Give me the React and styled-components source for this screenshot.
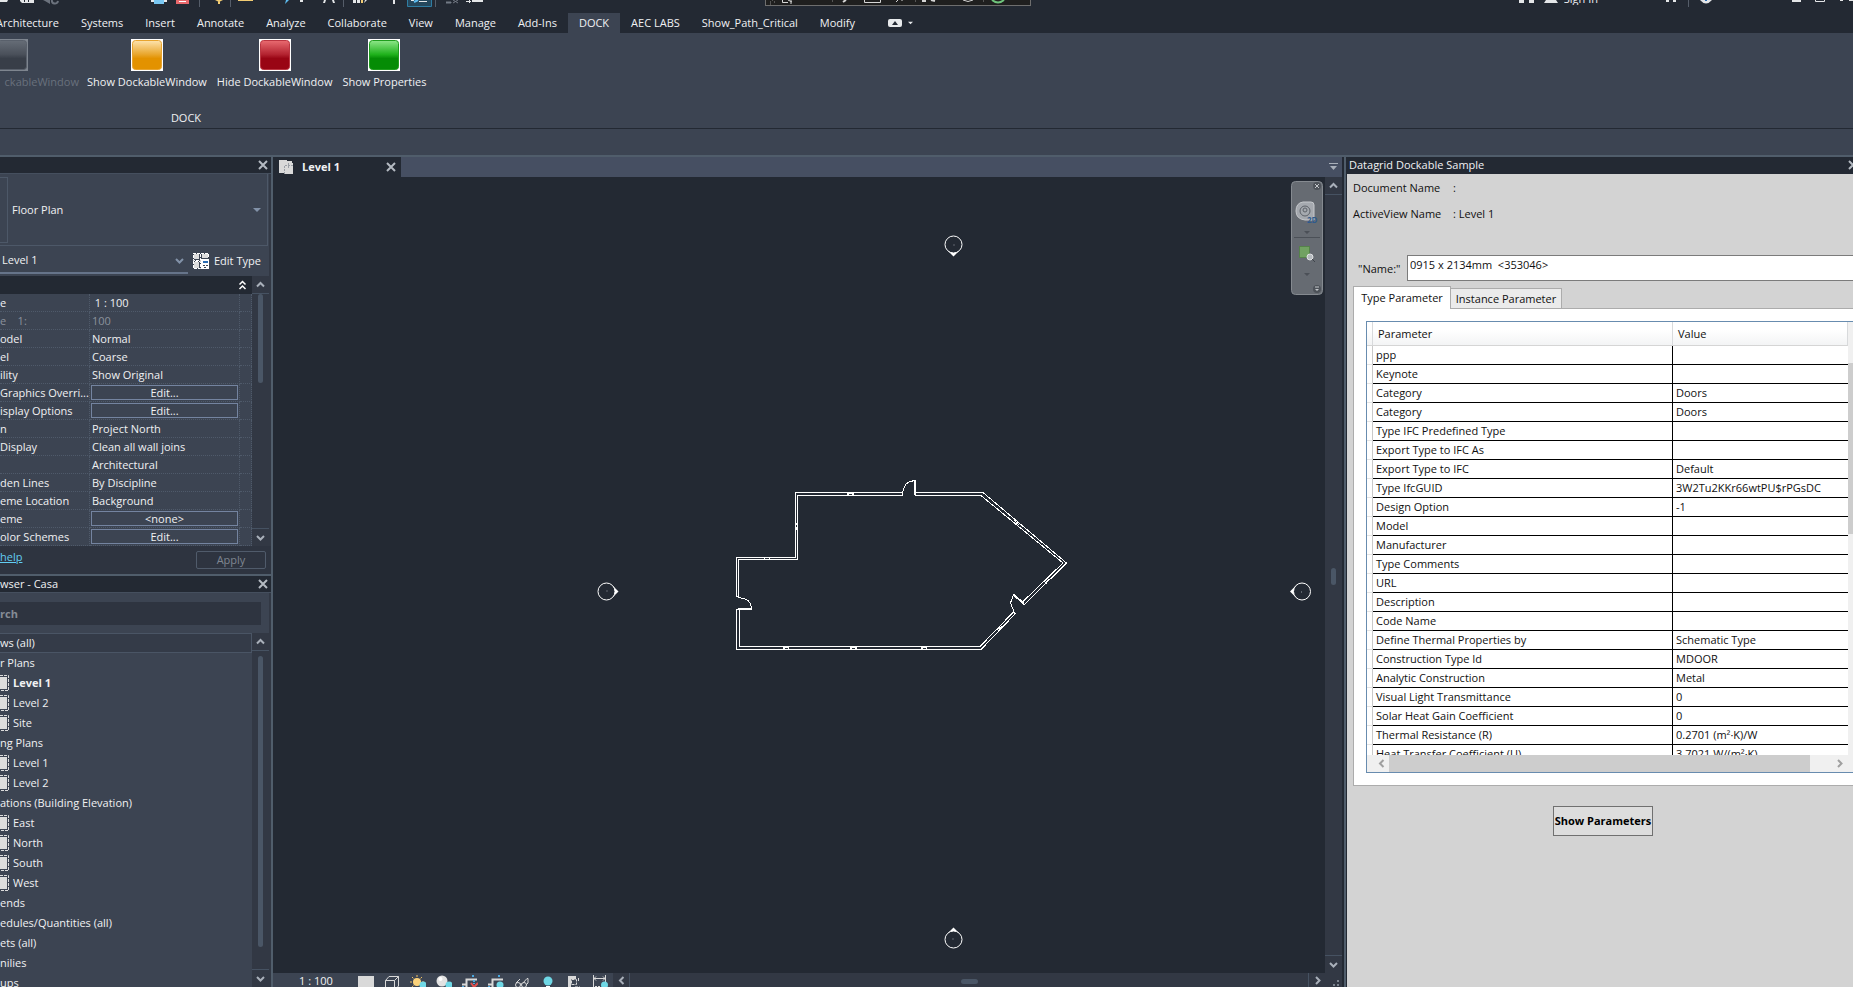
import React from "react";
import styled, { createGlobalStyle, css } from "styled-components";

const c = {
  ink: "#232933",
  panel: "#3c4452",
  well: "#2e3440",
  track: "#323844",
  line: "#505d6b",
  dots: "#4f5a6a",
  tabs: "#464f62",
  text: "#f0f1f3",
  glyph: "#a9b0ba",
};

const Global = createGlobalStyle`
  *, *::before, *::after { box-sizing: border-box; }
  body { margin: 0; background: ${c.ink}; overflow: hidden; }
  body, button, input, select, table {
    font-family: "Open Sans", "Noto Sans", sans-serif;
    font-size: 11px;
    line-height: 16px;
  }
  button, input, select { margin: 0; padding: 0; border: 0; border-radius: 0; color: inherit; background: none; }
  svg { display: block; flex: none; }
  ul { list-style: none; margin: 0; padding: 0; }
`;

const Shell = styled.div`
  display: flex;
  flex-direction: column;
  height: 100vh;
  color: ${c.text};
  overflow: hidden;
  white-space: nowrap;
`;

/* ---------- top bars ---------- */
const TitleBar = styled.header`
  position: relative;
  display: flex;
  align-items: flex-start;
  height: 13px;
  flex: none;
  background: ${c.ink};
`;
const QuickItem = styled.button`
  flex: none;
  margin-left: ${(p) => p.$gap}px;
`;
const Spacer = styled.div`
  flex: 1;
`;
const FloatBar = styled.div`
  position: absolute;
  left: 765px;
  top: 0;
  width: 266px;
  height: 6px;
  display: flex;
  background: #1f1f1f;
  border: 1px solid #6e6e6e;
  border-top: 0;
  overflow: hidden;
`;
const SignIn = styled.button`
  height: 5px;
  margin-left: 6px;
  display: flex;
  align-items: flex-end;
  overflow: hidden;
  line-height: 12px;
`;
const RibbonTabs = styled.nav`
  display: flex;
  align-items: center;
  flex: none;
  height: 20px;
  margin-left: -15px;
  background: ${c.ink};
`;
const RibbonTab = styled.button`
  height: 20px;
  padding: 0 11px;
  background: ${(p) => (p.$on ? c.panel : "transparent")};
`;
const CollapseButton = styled.button`
  display: flex;
  align-items: center;
  gap: 6px;
  margin-left: 22px;
`;
const Ribbon = styled.section`
  flex: none;
  height: 96px;
  background: ${c.panel};
  border-bottom: 1px solid ${c.ink};
`;
const RibbonItems = styled.div`
  display: flex;
  gap: 6px;
  height: 77px;
  padding-top: 6px;
`;
const RibbonButton = styled.button`
  display: flex;
  flex-direction: column;
  align-items: center;
  justify-content: flex-start;
  align-self: flex-start;
  gap: 3px;
  padding: 0 2px;
  color: ${(p) => (p.disabled ? "#69717d" : "inherit")};
  ${(p) =>
    p.$cut &&
    css`
      width: 79px;
      padding: 0;
      align-items: flex-start;
    `}
`;
const RibbonLabel = styled.span`
  align-self: flex-end;
`;
const GroupName = styled.div`
  width: 372px;
  text-align: center;
`;
const OptionsBar = styled.div`
  flex: none;
  height: 28px;
  background: ${c.panel};
  border-bottom: 2px solid ${c.line};
`;

/* ---------- workspace ---------- */
const Workspace = styled.main`
  display: flex;
  flex: 1;
  min-height: 0;
`;
const LeftDock = styled.aside`
  display: flex;
  flex-direction: column;
  flex: none;
  width: 273px;
  border-right: 2px solid ${c.line};
  background: ${c.track};
`;
const DockTitle = styled.div`
  display: flex;
  align-items: center;
  justify-content: space-between;
  flex: none;
  height: 17px;
  padding: 0 ${(p) => p.$right ?? 3}px 0 ${(p) => p.$left ?? 0}px;
  background: ${c.ink};
  border-bottom: 1px solid ${(p) => p.$edge ?? "#454f5e"};
`;
const PropertyBody = styled.div`
  flex: none;
  margin-right: 2px;
  background: ${c.panel};
`;
const TypePicker = styled.label`
  display: flex;
  align-items: center;
  height: 72px;
  margin-right: 1px;
  padding-right: 6px;
  border: 1px solid #4d5868;
  border-width: 0 1px 1px 0;
`;
const Thumb = styled.span`
  width: 8px;
  height: 66px;
  margin-right: 4px;
  border: 1px solid #4d5868;
  border-left: 0;
`;
const PlainSelect = styled.select`
  appearance: none;
  flex: 1;
  min-width: 0;
  height: 20px;
  outline: none;
`;
const FilterRow = styled.div`
  display: flex;
  align-items: center;
  height: 30px;
  gap: 5px;
`;
const FilterPicker = styled.label`
  display: flex;
  align-items: center;
  width: 188px;
  height: 26px;
  padding: 0 4px 0 2px;
  border-bottom: 2px solid #66748a;
`;
const EditType = styled.button`
  display: flex;
  align-items: center;
  gap: 5px;
`;
const Columns = styled.div`
  display: flex;
  flex: ${(p) => (p.$grow ? 1 : "none")};
  min-height: 0;
`;
const GroupHead = styled.div`
  display: flex;
  align-items: center;
  justify-content: flex-end;
  height: 18px;
  padding-right: 5px;
  background: ${c.ink};
`;
const PropTable = styled.table`
  width: 252px;
  table-layout: fixed;
  border-collapse: separate;
  border-spacing: 0;
`;
const PropName = styled.th`
  width: 90px;
  height: 18px;
  padding: 0;
  overflow: hidden;
  text-align: left;
  font-weight: 400;
  white-space: pre;
  color: ${(p) => (p.$dim ? "#8b929c" : "inherit")};
  border-right: 1px dotted ${c.dots};
  border-bottom: 1px dotted ${c.dots};
`;
const PropValue = styled.td`
  height: 18px;
  padding: 0 1px 0 ${(p) => (p.$button ? 1 : 2)}px;
  color: ${(p) => (p.$dim ? "#8b929c" : "inherit")};
  border-right: 1px dotted ${c.dots};
  border-bottom: 1px dotted ${c.dots};
`;
const PropMark = styled.td`
  width: 12px;
  padding: 0;
  border-right: 1px dotted ${c.dots};
  border-bottom: 1px dotted ${c.dots};
`;
const CellButton = styled.button`
  display: block;
  width: 100%;
  height: 15px;
  line-height: 13px;
  border: 1px solid #7484a0;
`;
const PropFooter = styled.div`
  display: flex;
  align-items: flex-start;
  justify-content: space-between;
  flex: none;
  height: 30px;
  padding: 3px 5px 0 0;
  background: ${c.well};
  border-bottom: 2px solid ${c.line};
`;
const HelpLink = styled.a`
  color: #62cdf2;
  text-decoration: underline;
`;
const ApplyButton = styled.button`
  width: 70px;
  height: 18px;
  margin-top: 2px;
  color: #7f8691;
  border: 1px solid #505b6b;
  border-radius: 2px;
`;
const SearchRow = styled.div`
  flex: none;
  height: 40px;
  margin-right: 2px;
  padding: 9px 8px 0 0;
  background: ${c.panel};
`;
const SearchBox = styled.input`
  display: block;
  width: 100%;
  height: 23px;
  background: ${c.well};
  outline: none;
  &::placeholder {
    color: #868c96;
    font-weight: 700;
    opacity: 1;
  }
`;
const Tree = styled.ul`
  width: 252px;
  overflow: hidden;
  background: ${c.panel};
`;
const TreeRow = styled.li`
  display: flex;
  align-items: center;
  gap: 4px;
  height: 20px;
  font-weight: ${(p) => (p.$bold ? 700 : 400)};
  ${(p) =>
    p.$root &&
    css`
      background: #343b48;
      border: 1px solid #4a5565;
      border-left: 0;
    `}
`;

/* ---------- scroll bars ---------- */
const Bar = styled.div`
  display: flex;
  flex: none;
  flex-direction: column;
  width: 17px;
  background: ${c.track};
`;
const BarButton = styled.button`
  display: flex;
  align-items: center;
  justify-content: center;
  width: 17px;
  height: 18px;
  border: 0 solid #465262;
  border-top-width: ${(p) => (p.$end ? 1 : 0)}px;
  border-bottom-width: ${(p) => (p.$end ? 0 : 1)}px;
`;
const BarTrack = styled.div`
  display: flex;
  flex-direction: column;
  align-items: center;
  flex: 1;
  padding-top: ${(p) => p.$from}px;
`;
const BarThumb = styled.div`
  width: 5px;
  height: ${(p) => p.$size}px;
  border-radius: 3px;
  background: #4a5666;
`;

/* ---------- drawing area ---------- */
const View = styled.section`
  display: flex;
  flex-direction: column;
  flex: 1;
  min-width: 0;
`;
const ViewTabs = styled.div`
  display: flex;
  align-items: center;
  justify-content: space-between;
  flex: none;
  height: 20px;
  padding-right: 4px;
  background: ${c.tabs};
`;
const ViewTab = styled.div`
  display: flex;
  align-items: center;
  width: 128px;
  height: 20px;
  padding: 0 5px 0 6px;
  background: ${c.ink};
`;
const ViewName = styled.strong`
  flex: 1;
  margin-left: 8px;
`;
const Canvas = styled.div`
  position: relative;
  flex: 1;
  min-width: 0;
  background: ${c.ink};
`;
const Drawing = styled.svg`
  width: 100%;
  height: 100%;
`;
const NavBar = styled.div`
  position: absolute;
  top: 4px;
  right: 2px;
  width: 32px;
  height: 114px;
`;
const ViewBar = styled.div`
  display: flex;
  align-items: flex-start;
  flex: none;
  height: 14px;
  background: ${c.track};
`;
const ViewTools = styled.div`
  display: flex;
  width: 340px;
  height: 14px;
  padding-left: 26px;
  background: ${c.panel};
`;
const ScaleButton = styled.button`
  width: 54px;
  height: 14px;
  text-align: left;
  overflow: hidden;
`;
const ViewTool = styled.button`
  display: flex;
  align-items: flex-start;
  justify-content: center;
  width: 26px;
  height: 14px;
  padding-top: 2px;
  overflow: hidden;
`;
const HTrack = styled.div`
  flex: 1;
  padding: 6px 0 0 331px;
`;
const HThumb = styled.div`
  width: 17px;
  height: 5px;
  border-radius: 3px;
  background: #4a5666;
`;
const HButton = styled.button`
  display: flex;
  align-items: flex-start;
  justify-content: center;
  width: 17px;
  height: 14px;
  padding-top: 3px;
  border: 0 solid #465262;
  border-left-width: ${(p) => (p.$end ? 1 : 0)}px;
  border-right-width: ${(p) => (p.$end ? 0 : 1)}px;
`;

/* ---------- parameter panel ---------- */
const RightDock = styled.aside`
  display: flex;
  flex-direction: column;
  flex: none;
  width: 509px;
  overflow: hidden;
  border-left: 2px solid ${c.line};
  background: ${c.ink};
  margin-left: 2px;
`;
const ParamBody = styled.div`
  flex: 1;
  margin-left: 1px;
  padding: 6px 0 0 6px;
  color: #101010;
  background: #d3d3d3;
`;
const Info = styled.div`
  display: grid;
  grid-template-columns: 100px 1fr;
  row-gap: 10px;
  margin-bottom: 33px;
`;
const NameRow = styled.div`
  display: flex;
  gap: 5px;
`;
const NameLabel = styled.label`
  width: 49px;
  padding: 6px 0 0 5px;
`;
const NameBox = styled.input`
  flex: 1;
  min-width: 0;
  height: 26px;
  padding: 0 0 7px 2px;
  background: #fff;
  border: 1px solid #7b7b7b;
  border-right: 0;
  outline: none;
`;
const Tabs = styled.div`
  display: flex;
  align-items: flex-end;
  height: 27px;
`;
const Tab = styled.button`
  height: ${(p) => (p.$on ? 23 : 20)}px;
  width: ${(p) => (p.$on ? 98 : 111)}px;
  margin-bottom: ${(p) => (p.$on ? -1 : 0)}px;
  border: 1px solid #acacac;
  border-bottom: 0;
  border-left-width: ${(p) => (p.$on ? 1 : 0)}px;
  background: ${(p) => (p.$on ? "#fff" : "#ebebeb")};
  position: relative;
`;
const TabPage = styled.div`
  padding: 12px 0 12px 12px;
  background: #fff;
  border: 1px solid #acacac;
  border-right: 0;
`;
const GridBox = styled.div`
  border: 1px solid #688caf;
  border-right: 0;
`;
const GridView = styled.div`
  display: flex;
  height: 433px;
  overflow: hidden;
`;
const Grid = styled.table`
  flex: 1;
  align-self: flex-start;
  table-layout: fixed;
  border-collapse: separate;
  border-spacing: 0;
`;
const HeadCell = styled.th`
  width: ${(p) => p.$w};
  height: 24px;
  padding: 0 0 0 ${(p) => (p.$mark ? 0 : 5)}px;
  text-align: left;
  font-weight: 400;
  background: linear-gradient(#fff 35%, #f3f4f5);
  border-right: 1px solid #d8dadc;
  border-bottom: 1px solid #d5d5d5;
`;
const MarkCell = styled.td`
  height: 19px;
  padding: 0;
  background: #fff;
  border-right: 1px solid #c9c9c9;
  border-bottom: 1px solid #e4e4e4;
`;
const GridCell = styled.td`
  height: 19px;
  padding: 0 0 0 3px;
  border-bottom: 1px solid #000;
  border-right: ${(p) => (p.$last ? "0" : "1px solid #000")};
`;
const GridScroll = styled.div`
  flex: none;
  width: 5px;
  padding-top: 41px;
  background: #f0f0f0;
`;
const GridScrollThumb = styled.div`
  height: 171px;
  background: #cdcdcd;
`;
const GridHScroll = styled.div`
  display: flex;
  align-items: center;
  height: 17px;
  padding: 0 9px 0 10px;
  gap: 3px;
  background: #f0f0f0;
`;
const GridHTrack = styled.div`
  flex: 1;
`;
const GridHThumb = styled.div`
  width: 95%;
  height: 17px;
  background: #cdcdcd;
`;
const ShowButton = styled.button`
  display: block;
  width: 100px;
  height: 30px;
  margin: 20px auto 0 200px;
  overflow: hidden;
  font-weight: 700;
  color: #000;
  background: #dddddd;
  border: 1px solid #707070;
`;

/* ---------- glyphs ---------- */
const Chevron = ({ dir = "down", color = c.glyph, size = 9, w = 2 }) => {
  const d = {
    down: "M1 3 L4.5 6.5 L8 3",
    up: "M1 6.5 L4.5 3 L8 6.5",
    left: "M6.5 1 L3 4.5 L6.5 8",
    right: "M3 1 L6.5 4.5 L3 8",
  }[dir];
  return (
    <svg width={size} height={size} viewBox="0 0 9 9" fill="none" stroke={color} strokeWidth={w}>
      <path d={d} />
    </svg>
  );
};
const Cross = ({ cut }) => (
  <svg width={cut ? 5 : 10} height="10" viewBox={cut ? "0 0 5 10" : "0 0 10 10"} stroke="#b4bac2" strokeWidth="2">
    <path d="M1 1 L9 9 M9 1 L1 9" />
  </svg>
);
const Arrow = ({ color = "#8292a8", w = 8 }) => (
  <svg width={w} height="4" viewBox="0 0 8 4" fill={color}>
    <path d="M0 0 H8 L4 4 Z" />
  </svg>
);
const EditTypeIcon = () => (
  <svg width="16" height="16" viewBox="0 0 16 16">
    <g fill="#dcdcdc">
      <rect x="1" y="1" width="5" height="5" />
      <rect x="9" y="1" width="6" height="4" />
      <rect x="1" y="9" width="5" height="6" />
    </g>
    <path d="M0 0.500H7.500V7.500H0.500V0 M8 0.500H15.500V5 M0.500 8V15.500H7.500V8.500H0" fill="none" stroke="#fff" strokeDasharray="3 1" />
    <rect x="8" y="6" width="8" height="10" fill="#fff" />
    <rect x="10" y="8" width="5" height="2" fill="#2a6cb3" />
    <path d="M10 12h2v1h-2z M13 12h2v1h-2z M11 14h2v1h-2z" fill="#3c4452" />
  </svg>
);
const ViewIcon = () => (
  <svg width="15" height="14" viewBox="0 0 15 14">
    <rect x="0" y="0" width="8" height="13" fill="#d9d9d9" />
    <rect x="8" y="1" width="5" height="4" fill="#d9d9d9" />
    <rect x="5" y="3" width="9" height="11" fill="#d9d9d9" />
    <path d="M5.500 14V5 M9.500 3V9 M6 5.500H14" fill="none" stroke="#9a9fa6" strokeDasharray="2 1" />
  </svg>
);
const PlanIcon = () => (
  <svg width="9" height="16" viewBox="0 0 9 16">
    <rect x="0" y="2" width="7" height="12" fill="#dcdcdc" />
    <path d="M0 0.500H8.500V15.500H0" fill="none" stroke="#dcdcdc" strokeDasharray="3 1" />
  </svg>
);
const Swatch = ({ id, top, mid, low, edge, cut }) => (
  <svg width={cut ? 28 : 32} height="32" viewBox={cut ? "4 0 28 32" : "0 0 32 32"}>
    <defs>
      <linearGradient id={id} x1="0" y1="0" x2="0" y2="1">
        <stop offset="0" stopColor={top} />
        <stop offset="0.48" stopColor={mid} />
        <stop offset="0.62" stopColor={low} />
        <stop offset="1" stopColor={low} />
      </linearGradient>
    </defs>
    <rect width="32" height="32" fill={cut ? "#7e858f" : "#fff"} />
    <rect x="1.5" y="1.5" width="29" height="29" rx="3" fill={`url(#${id})`} stroke={edge} />
  </svg>
);

const Sep = ({ gap }) => (
  <QuickItem as="span" $gap={gap}>
    <svg width="1" height="7">
      <rect width="1" height="7" fill="#555d69" />
    </svg>
  </QuickItem>
);
const Scrap = ({ gap, w, label, children }) => (
  <QuickItem $gap={gap} aria-label={label}>
    <svg width={w} height="7" viewBox={`0 0 ${w} 7`} fill="#e4e6e8">
      {children}
    </svg>
  </QuickItem>
);

function QuickAccess() {
  return (
    <TitleBar>
      <Scrap gap={0} w={8} label="Open"><path d="M0 0H8L7 2H0z" /></Scrap>
      <Scrap gap={12} w={14} label="Save"><path d="M0 0h14v3H2L0 1z" /><path d="M4 0h1v2H4z M8 0h1v2H8z" fill={c.ink} /></Scrap>
      <Scrap gap={9} w={16} label="Sync"><path d="M0 0h7v4L2 1z" fill="#6b727d" /><path d="M9 0a3 3 0 0 0 6 1" stroke="#6b727d" strokeWidth="2" fill="none" /></Scrap>
      <Scrap gap={92} w={16} label="Print"><path d="M0 0h16v2H0z" /><path d="M3 0h10v4H3z" fill="#79c7f2" /></Scrap>
      <Scrap gap={9} w={13} label="PDF"><path d="M0 0h13v4H0z" fill="#e8686c" /><path d="M3 1h7v1H3z" fill="#fff" /></Scrap>
      <Sep gap={10} />
      <Scrap gap={15} w={8} label="Measure"><path d="M0 0h8L4 2z M3 0h2v4H3z" fill="#f2cc73" /></Scrap>
      <Sep gap={7} />
      <Scrap gap={7} w={15} label="Dimension"><path d="M0 0h15v1H0z" fill="#f2cc73" /></Scrap>
      <Scrap gap={31} w={5} label="Tag"><path d="M2 0h3L1 4z" fill="#5cbcf0" /></Scrap>
      <Scrap gap={10} w={4} label="Detail"><path d="M1 0h3v2H1z" /></Scrap>
      <Scrap gap={20} w={12} label="Text"><path d="M1 0h2L2 3H0z M9 0h2l1 3h-2z" /></Scrap>
      <Sep gap={8} />
      <Scrap gap={9} w={14} label="3D view"><path d="M0 0h3v3H0z M4 0h3v3H4z M12 0h2L11 3z" /><path d="M8 0h2v3H8z" fill="#f2cc73" /></Scrap>
      <Scrap gap={26} w={2} label="Section"><path d="M0 0h2v4H0z" /></Scrap>
      <Scrap gap={12} w={25} label="Thin lines">
        <path d="M0.5 0V6.5H24.5V0" fill="#25475c" stroke="#2f7da3" />
        <path d="M4 0h3v1H4z M12 1h8v1h-8z" />
        <path d="M7 2L11 0" stroke="#5cbcf0" strokeWidth="2" />
      </Scrap>
      <Sep gap={3} />
      <Scrap gap={10} w={13} label="Close hidden"><path d="M0 2h5v1H0z M7 3L12 0 M7 0l5 3" stroke="#737a85" fill="#737a85" /></Scrap>
      <Scrap gap={7} w={17} label="Switch windows"><path d="M6 0h11v2H6z M3 0h1v3H3z M0 1h5v1H0z" /></Scrap>
      <FloatBar>
        <svg width="264" height="6" viewBox="0 0 264 6" fill="none" stroke="#d6d6d6">
          <path d="M4 2h1 M8 2h1 M6 0h1 M4 4h1" stroke="#8a8a8a" />
          <path d="M16.500 0V2.500H22 M22 0l4 2 M25 0v4" />
          <path d="M66.500 0v2 M149.500 0v2 M217.500 0v2" stroke="#555" />
          <path d="M77 2L80 0" strokeWidth="2" />
          <path d="M98.500 0V2.500H114.500V0" />
          <path d="M130 2L132 0 M136 0v1" />
          <path d="M157 0v1h3 M165 0l4 1" strokeWidth="2" />
          <path d="M197 0q5 3 10 0" />
          <path d="M226 0q6 5 12 0" stroke="#6fc47c" strokeWidth="2" />
        </svg>
      </FloatBar>
      <Spacer />
      <Scrap gap={0} w={15} label="Search"><path d="M0 0h5v3H0z M10 0h5v3h-5z" /></Scrap>
      <Scrap gap={10} w={14} label="Account"><path d="M2 0h10l2 3H0z" /></Scrap>
      <SignIn>Sign In</SignIn>
      <Scrap gap={68} w={10} label="Store"><path d="M0 0h3v2H0z M7 0h3v2H7z" /></Scrap>
      <Sep gap={12} />
      <Scrap gap={11} w={12} label="Help"><path d="M0 0h12q-6 7-12 0z" /><path d="M5 0h2v1H5z" fill="#2a6cb3" /></Scrap>
      <Scrap gap={80} w={9} label="Minimize"><path d="M0 0h9v2H0z" /></Scrap>
      <Scrap gap={14} w={10} label="Restore"><path d="M0.5 0V1.500H9.500V0" fill="none" stroke="#e4e6e8" /></Scrap>
      <Scrap gap={15} w={13} label="Close window"><path d="M0 0h3v1H0z M9 0h4v1H9z" /></Scrap>
    </TitleBar>
  );
}

const ribbonTabs = ["Architecture", "Systems", "Insert", "Annotate", "Analyze", "Collaborate", "View", "Manage", "Add-Ins", "DOCK", "AEC LABS", "Show_Path_Critical", "Modify"];

const props = [
  ["e", "1 : 100", "indent"],
  ["e    1:", "100", "dim"],
  ["odel", "Normal"],
  ["el", "Coarse"],
  ["ility", "Show Original"],
  ["Graphics Overri...", "Edit...", "button"],
  ["isplay Options", "Edit...", "button"],
  ["n", "Project North"],
  ["Display", "Clean all wall joins"],
  ["", "Architectural"],
  ["den Lines", "By Discipline"],
  ["eme Location", "Background"],
  ["eme", "<none>", "button"],
  ["olor Schemes", "Edit...", "button"],
];

const tree = [
  ["ws (all)", "root"],
  ["r Plans"],
  ["Level 1", "view", true],
  ["Level 2", "view"],
  ["Site", "view"],
  ["ng Plans"],
  ["Level 1", "view"],
  ["Level 2", "view"],
  ["ations (Building Elevation)"],
  ["East", "view"],
  ["North", "view"],
  ["South", "view"],
  ["West", "view"],
  ["ends"],
  ["edules/Quantities (all)"],
  ["ets (all)"],
  ["nilies"],
  ["ups"],
];

const params = [
  ["ppp", ""],
  ["Keynote", ""],
  ["Category", "Doors"],
  ["Category", "Doors"],
  ["Type IFC Predefined Type", ""],
  ["Export Type to IFC As", ""],
  ["Export Type to IFC", "Default"],
  ["Type IfcGUID", "3W2Tu2KKr66wtPU$rPGsDC"],
  ["Design Option", "-1"],
  ["Model", ""],
  ["Manufacturer", ""],
  ["Type Comments", ""],
  ["URL", ""],
  ["Description", ""],
  ["Code Name", ""],
  ["Define Thermal Properties by", "Schematic Type"],
  ["Construction Type Id", "MDOOR"],
  ["Analytic Construction", "Metal"],
  ["Visual Light Transmittance", "0"],
  ["Solar Heat Gain Coefficient", "0"],
  ["Thermal Resistance (R)", "0.2701 (m²·K)/W"],
  ["Heat Transfer Coefficient (U)", "3.7021 W/(m²·K)"],
];

const VScroll = ({ from, size }) => (
  <Bar>
    <BarButton aria-label="Scroll up"><Chevron dir="up" /></BarButton>
    <BarTrack $from={from}>
      <BarThumb $size={size} />
    </BarTrack>
    <BarButton $end aria-label="Scroll down"><Chevron /></BarButton>
  </Bar>
);

const Marker = ({ x, y, turn }) => (
  <g transform={`translate(${x} ${y}) rotate(${turn})`}>
    <path d="M0 -12 L6 -6 H-6 Z" fill="#fff" stroke="none" />
    <circle r="8.500" fill={c.ink} stroke="#fff" />
    <rect x="-1" y="-1" width="1" height="1" fill="#9a9fa6" stroke="none" />
  </g>
);

const FloorPlan = () => (
  <Drawing viewBox="273 177 1052 796" fill="none" stroke="#fff" role="img" aria-label="Floor plan of Level 1">
    <g shapeRendering="crispEdges">
      <path d="M736.500 597V557.500H795.500V492.500H902.500V495.500H797.500V559.500H738.500V596.500H736" />
      <path d="M915.500 492.500H983L1066.500 563L1024.500 604.500L1022 602.500L1063 563L981 495.500H915.500Z" />
      <path d="M1015.500 613.500L981 649.500H736.500V609.500H739V646.500H980L1013 612.500Z" />
      <path d="M915 480V495" strokeWidth="2" />
      <path d="M738 609H752" strokeWidth="2" />
      <path d="M1013.500 594.500L1024 604" strokeWidth="2" />
      <path d="M902.500 493L904 488L906 484L910 481.500L915 480.500" />
      <path d="M738 597.500L744 598.500L748 600.500L750.500 604L751.500 608" />
      <path d="M1013.500 594.500L1010.500 603L1014.500 613" />
      <path d="M847 494H854 M783 648H789 M850 648H857 M921 648H927" strokeWidth="3" />
      <path d="M849 494.500H852 M785 648.500H788 M852 648.500H855 M923 648.500H926" stroke={c.ink} />
      <path d="M764.500 558V560 M769.500 558V560 M796.500 523V525 M796.500 527V530" />
      <path d="M1014 520L1019 525 M1018 521L1016 524 M1045 583L1049 579 M1044 581L1047 584 M997 630L1002 626 M998 628L1000 630" />
    </g>
    <Marker x={953.5} y={244.5} turn={180} />
    <Marker x={606.5} y={591.5} turn={90} />
    <Marker x={1302} y={591.5} turn={-90} />
    <Marker x={953.5} y={939.5} turn={0} />
  </Drawing>
);

const Navigation = () => (
  <svg width="32" height="114" viewBox="0 0 32 114">
    <rect x="0.5" y="0.5" width="31" height="113" rx="4" fill="#666b72" stroke="#858a90" />
    <circle cx="26" cy="5" r="4" fill="#4d5259" />
    <path d="M24 3l4 4 M28 3l-4 4" stroke="#c4c7cb" />
    <path d="M12 21H20Q23 21 23 24V39H14Q5 38 5 30Q5 22 12 21Z" fill="#a5a9af" stroke="#c6c9cd" />
    <circle cx="14" cy="30" r="5" fill="none" stroke="#5c6168" />
    <circle cx="14" cy="29" r="2" fill="none" stroke="#5c6168" />
    <text x="16" y="42" fontSize="8" fontWeight="700" fill="#2f5a8c">2D</text>
    <path d="M13 50h6l-3 3z M13 92h6l-3 3z" fill="#4b5057" />
    <path d="M3 56.500H29" stroke="#4b5057" />
    <rect x="8.500" y="65.500" width="10" height="11" fill="#71a262" stroke="#55824a" />
    <circle cx="19" cy="76" r="3" fill="#b7bbc0" stroke="#e0e2e4" />
    <path d="M21 78l3 3" stroke="#3f444b" />
    <circle cx="26" cy="108" r="4" fill="#4d5259" />
    <path d="M24 106h4" stroke="#c4c7cb" />
    <path d="M24 108h4l-2 2z" fill="#c4c7cb" />
  </svg>
);

const cyan = "#6fd8e6";
const viewTools = [
  ["Detail level", <rect key="a" x="0" y="1" width="16" height="15" fill="#d9d9d9" />],
  ["Visual style", <path key="a" d="M1.500 5.500h9v10h-9z M1.500 5.500L5 1.500H14.500L10.500 5.500 M14.500 1.500V11L10.500 15" fill="none" stroke="#d9d9d9" />],
  ["Sun path", <g key="a"><path d="M7 0v14 M0 7h14 M2 2l10 10 M12 2L2 12" stroke="#f0c062" strokeDasharray="2 1" /><circle cx="7" cy="7" r="4" fill="#fbd27a" /><circle cx="13" cy="10" r="3.500" fill={cyan} /></g>],
  ["Shadows", <g key="a"><circle cx="6" cy="6" r="5.500" fill="#e2e2e2" /><circle cx="4.500" cy="4" r="2" fill="#fff" /><circle cx="13" cy="10" r="3.500" fill={cyan} /></g>],
  ["Crop view", <g key="a" fill="none"><path d="M0 9.500H4.500V4.500H15 M4.500 15V9" stroke="#d9d9d9" strokeWidth="2" /><path d="M11 0v3 M0 12h3 M12 5v4" stroke="#4aa8e0" strokeWidth="2" strokeDasharray="2 1" /><path d="M9 8l3 4 4-4" stroke="#e0504e" strokeWidth="2" /></g>],
  ["Show crop region", <g key="a" fill="none"><path d="M0 9.500H4.500V4.500H15 M4.500 15V9" stroke="#d9d9d9" strokeWidth="2" /><path d="M11 0v3 M0 12h3" stroke="#4aa8e0" strokeWidth="2" strokeDasharray="2 1" /><circle cx="12" cy="10" r="3.500" fill={cyan} /></g>],
  ["Temporary hide", <g key="a" fill="none" stroke="#d9d9d9"><circle cx="4" cy="10" r="2.500" /><circle cx="10" cy="10" r="2.500" /><path d="M2 8L6 4 M9 8L13 3.500h1V8L12 10 M6 9h2" /></g>],
  ["Reveal hidden", <g key="a"><circle cx="8" cy="6" r="4.500" fill={cyan} /><path d="M6 11h4v4H6z" fill="#fff" /></g>],
  ["Temporary view", <g key="a"><path d="M2 1h8v11H2z" fill="#d9d9d9" /><path d="M5 4h8v8H5z" fill={c.panel} /><path d="M5.500 4.500h5v5h-5z M12.500 3v3 M9 12h5" fill="none" stroke="#d9d9d9" strokeDasharray="3 1" /></g>],
  ["Constraints", <g key="a" fill="none" stroke="#d9d9d9"><path d="M1.500 0V14 M13.500 0V7 M1 3.500H14 M4 1.500L2 3.500L4 5.500 M11 1.500L13 3.500L11 5.500" /><path d="M3 11.500H9" strokeDasharray="2 1" /><circle cx="12.500" cy="10" r="3.500" fill={cyan} stroke="none" /></g>],
];

export default function App() {
  return (
    <Shell>
      <Global />
      <QuickAccess />
      <RibbonTabs>
        {ribbonTabs.map((t) => (
          <RibbonTab key={t} $on={t === "DOCK"}>{t}</RibbonTab>
        ))}
        <CollapseButton aria-label="Minimize ribbon">
          <svg width="14" height="8" viewBox="0 0 14 8">
            <rect width="14" height="8" rx="2" fill="#e8eaec" />
            <path d="M4 6L7 2L10 6z" fill={c.ink} />
          </svg>
          <Arrow color="#e8eaec" w={5} />
        </CollapseButton>
      </RibbonTabs>
      <Ribbon>
        <RibbonItems>
          <RibbonButton disabled $cut>
            <Swatch cut id="gray" top="#666d77" mid="#4a505a" low="#383e48" edge="#59606b" />
            <RibbonLabel>ckableWindow</RibbonLabel>
          </RibbonButton>
          <RibbonButton>
            <Swatch id="amber" top="#fde3ae" mid="#e9a62c" low="#e39200" edge="#e8a42e" />
            Show DockableWindow
          </RibbonButton>
          <RibbonButton>
            <Swatch id="red" top="#e96b71" mid="#b32330" low="#990514" edge="#bb3541" />
            Hide DockableWindow
          </RibbonButton>
          <RibbonButton>
            <Swatch id="green" top="#8ee689" mid="#20b21c" low="#058c05" edge="#1f9d1d" />
            Show Properties
          </RibbonButton>
        </RibbonItems>
        <GroupName>DOCK</GroupName>
      </Ribbon>
      <OptionsBar />

      <Workspace>
        <LeftDock>
          <DockTitle>
            <span />
            <button aria-label="Close properties"><Cross /></button>
          </DockTitle>
          <PropertyBody>
            <TypePicker>
              <Thumb />
              <PlainSelect aria-label="Type"><option>Floor Plan</option></PlainSelect>
              <Arrow />
            </TypePicker>
            <FilterRow>
              <FilterPicker>
                <PlainSelect aria-label="Filter"><option>Level 1</option></PlainSelect>
                <Chevron color="#8292a8" w={2} />
              </FilterPicker>
              <EditType><EditTypeIcon />Edit Type</EditType>
            </FilterRow>
            <Columns>
              <div>
                <GroupHead>
                  <svg width="9" height="10" viewBox="0 0 9 10" fill="none" stroke="#fff" strokeWidth="1.500">
                    <path d="M1.500 4.500L4.500 1.500L7.500 4.500 M1.500 9L4.500 6L7.500 9" />
                  </svg>
                </GroupHead>
                <PropTable>
                  <tbody>
                    {props.map(([name, value, kind], i) => (
                      <tr key={i}>
                        <PropName scope="row" $dim={kind === "dim"}>{name}</PropName>
                        <PropValue $dim={kind === "dim"} $button={kind === "button"}>
                          {kind === "button" ? <CellButton>{value}</CellButton> : kind === "indent" ? <>&nbsp;{value}</> : value}
                        </PropValue>
                        <PropMark />
                      </tr>
                    ))}
                  </tbody>
                </PropTable>
              </div>
              <VScroll from={0} size={89} />
            </Columns>
          </PropertyBody>
          <PropFooter>
            <HelpLink href="#help">help</HelpLink>
            <ApplyButton>Apply</ApplyButton>
          </PropFooter>
          <DockTitle>
            <span>wser - Casa</span>
            <button aria-label="Close browser"><Cross /></button>
          </DockTitle>
          <SearchRow>
            <SearchBox aria-label="Search" placeholder="rch" />
          </SearchRow>
          <Columns $grow>
            <Tree>
              {tree.map(([name, kind, bold], i) => (
                <TreeRow key={i} $root={kind === "root"} $bold={bold}>
                  {kind === "view" && <PlanIcon />}
                  {name}
                </TreeRow>
              ))}
            </Tree>
            <VScroll from={5} size={291} />
          </Columns>
        </LeftDock>

        <View>
          <ViewTabs>
            <ViewTab>
              <ViewIcon />
              <ViewName>Level 1</ViewName>
              <button aria-label="Close view"><Cross /></button>
            </ViewTab>
            <button aria-label="View list">
              <svg width="9" height="8" viewBox="0 0 9 8" fill={c.glyph}>
                <path d="M0 0h9v1H0z M1 3h7L4.500 7z" />
              </svg>
            </button>
          </ViewTabs>
          <Columns $grow>
            <Canvas>
              <FloorPlan />
              <NavBar><Navigation /></NavBar>
            </Canvas>
            <VScroll from={373} size={17} />
          </Columns>
          <ViewBar>
            <ViewTools>
              <ScaleButton>1 : 100</ScaleButton>
              {viewTools.map(([label, art]) => (
                <ViewTool key={label} aria-label={label}>
                  <svg width="16" height="16" viewBox="0 0 16 16">{art}</svg>
                </ViewTool>
              ))}
            </ViewTools>
            <HButton aria-label="Scroll left"><Chevron dir="left" /></HButton>
            <HTrack><HThumb /></HTrack>
            <HButton $end aria-label="Scroll right"><Chevron dir="right" /></HButton>
            <svg width="17" height="14" viewBox="0 0 17 14" fill="#7c848f">
              <path d="M12 7h2v2h-2z M12 11h2v2h-2z M8 11h2v2H8z" />
            </svg>
          </ViewBar>
        </View>

        <RightDock>
          <DockTitle $left={3} $right={0} $edge={c.ink}>
            <span>Datagrid Dockable Sample</span>
            <button aria-label="Close panel"><Cross cut /></button>
          </DockTitle>
          <ParamBody>
            <Info>
              <span>Document Name</span><span>:</span>
              <span>ActiveView Name</span><span>: Level 1</span>
            </Info>
            <NameRow>
              <NameLabel htmlFor="element-name">"Name:"</NameLabel>
              <NameBox id="element-name" defaultValue={"0915 x 2134mm  <353046>"} />
            </NameRow>
            <Tabs>
              <Tab $on>Type Parameter</Tab>
              <Tab>Instance Parameter</Tab>
            </Tabs>
            <TabPage>
              <GridBox>
                <GridView>
                  <Grid>
                    <thead>
                      <tr>
                        <HeadCell $w="6px" $mark />
                        <HeadCell $w="300px">Parameter</HeadCell>
                        <HeadCell $w="auto">Value</HeadCell>
                      </tr>
                    </thead>
                    <tbody>
                      {params.map(([name, value], i) => (
                        <tr key={i}>
                          <MarkCell />
                          <GridCell>{name}</GridCell>
                          <GridCell $last>{value}</GridCell>
                        </tr>
                      ))}
                    </tbody>
                  </Grid>
                  <GridScroll><GridScrollThumb /></GridScroll>
                </GridView>
                <GridHScroll>
                  <Chevron dir="left" color="#a0a0a0" />
                  <GridHTrack><GridHThumb /></GridHTrack>
                  <Chevron dir="right" color="#a0a0a0" />
                </GridHScroll>
              </GridBox>
            </TabPage>
            <ShowButton>Show Parameters</ShowButton>
          </ParamBody>
        </RightDock>
      </Workspace>
    </Shell>
  );
}
